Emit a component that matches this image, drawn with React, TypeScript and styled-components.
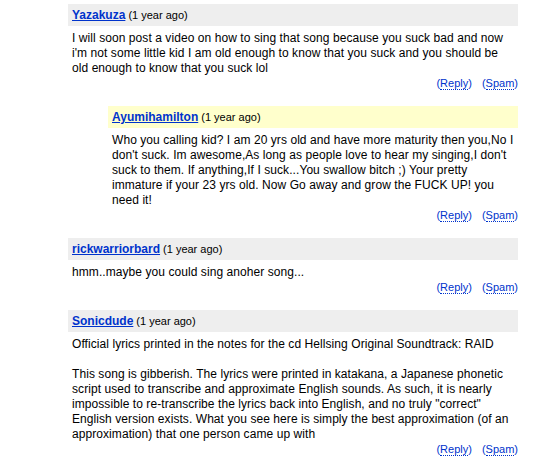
import React from "react";
import styled, { createGlobalStyle } from "styled-components";

type CommentData = {
    id: number;
    author: string;
    age: string;
    lines: string[];
    nested?: boolean;
};

const comments: CommentData[] = [
    {
        id: 1,
        author: "Yazakuza",
        age: "(1 year ago)",
        lines: [
            "I will soon post a video on how to sing that song because you suck bad and now i'm not some little kid I am old enough to know that you suck and you should be old enough to know that you suck lol"
        ]
    },
    {
        id: 2,
        author: "Ayumihamilton",
        age: "(1 year ago)",
        nested: true,
        lines: [
            "Who you calling kid? I am 20 yrs old and have more maturity then you,No I don't suck. Im awesome,As long as people love to hear my singing,I don't suck to them. If anything,If I suck...You swallow bitch ;) Your pretty immature if your 23 yrs old. Now Go away and grow the FUCK UP! you need it!"
        ]
    },
    {
        id: 3,
        author: "rickwarriorbard",
        age: "(1 year ago)",
        lines: ["hmm..maybe you could sing anoher song..."]
    },
    {
        id: 4,
        author: "Sonicdude",
        age: "(1 year ago)",
        lines: [
            "Official lyrics printed in the notes for the cd Hellsing Original Soundtrack: RAID",
            "",
            "This song is gibberish. The lyrics were printed in katakana, a Japanese phonetic script used to transcribe and approximate English sounds. As such, it is nearly impossible to re-transcribe the lyrics back into English, and no truly \"correct\" English version exists. What you see here is simply the best approximation (of an approximation) that one person came up with"
        ]
    }
];

export default function App(): React.JSX.Element {
    return (
        <>
            <GlobalStyle />
            <CommentList>
                {comments.map((comment) => (
                    <Comment key={comment.id} $nested={!!comment.nested}>
                        <CommentHeader $nested={!!comment.nested}>
                            <Author href="#">{comment.author}</Author>
                            <Age>{comment.age}</Age>
                        </CommentHeader>
                        <CommentBody $nested={!!comment.nested}>
                            {comment.lines.map((line, i) => (
                                <Line key={i}>{line || "\u00a0"}</Line>
                            ))}
                        </CommentBody>
                        <Actions>
                            <Action>(<ActionLink href="#">Reply</ActionLink>)</Action>
                            <Action>(<ActionLink href="#">Spam</ActionLink>)</Action>
                        </Actions>
                    </Comment>
                ))}
            </CommentList>
        </>
    );
}

const GlobalStyle = createGlobalStyle`
  body {
    margin: 0;
    background: #ffffff;
    font-family: "Liberation Sans", Arial, sans-serif;
    color: #000000;
  }
`;

const CommentList = styled.div`
  width: 450px;
  padding: 4px 0 0 68px;
  display: flex;
  flex-direction: column;
`;

const Comment = styled.div<{ $nested: boolean }>`
  margin-left: ${(p) => (p.$nested ? "40px" : "0")};
  margin-bottom: 15px;
`;

const CommentHeader = styled.div<{ $nested: boolean }>`
  height: 22px;
  display: flex;
  align-items: center;
  gap: 3px;
  padding: 0 4px;
  background: ${(p) => (p.$nested ? "#ffffcc" : "#eeeeee")};
`;

const Author = styled.a`
  font-size: 12px;
  font-weight: bold;
  color: #0033cc;
  text-decoration: underline;
`;

const Age = styled.span`
  font-size: 11px;
  color: #000000;
`;

const CommentBody = styled.div<{ $nested: boolean }>`
  padding: 5px ${(p) => (p.$nested ? "0" : "4px")} 0 4px;
  font-size: 12px;
  line-height: 15px;
  letter-spacing: 0.07px;
`;

const Line = styled.p`
  margin: 0;
`;

const Actions = styled.div`
  display: flex;
  justify-content: flex-end;
  gap: 10px;
  font-size: 11px;
  line-height: 15px;
`;

const Action = styled.span`
  color: #0033cc;
`;

const ActionLink = styled.a`
  color: #0033cc;
  text-decoration: none;
  border-bottom: 1px dotted #0033cc;
`;
